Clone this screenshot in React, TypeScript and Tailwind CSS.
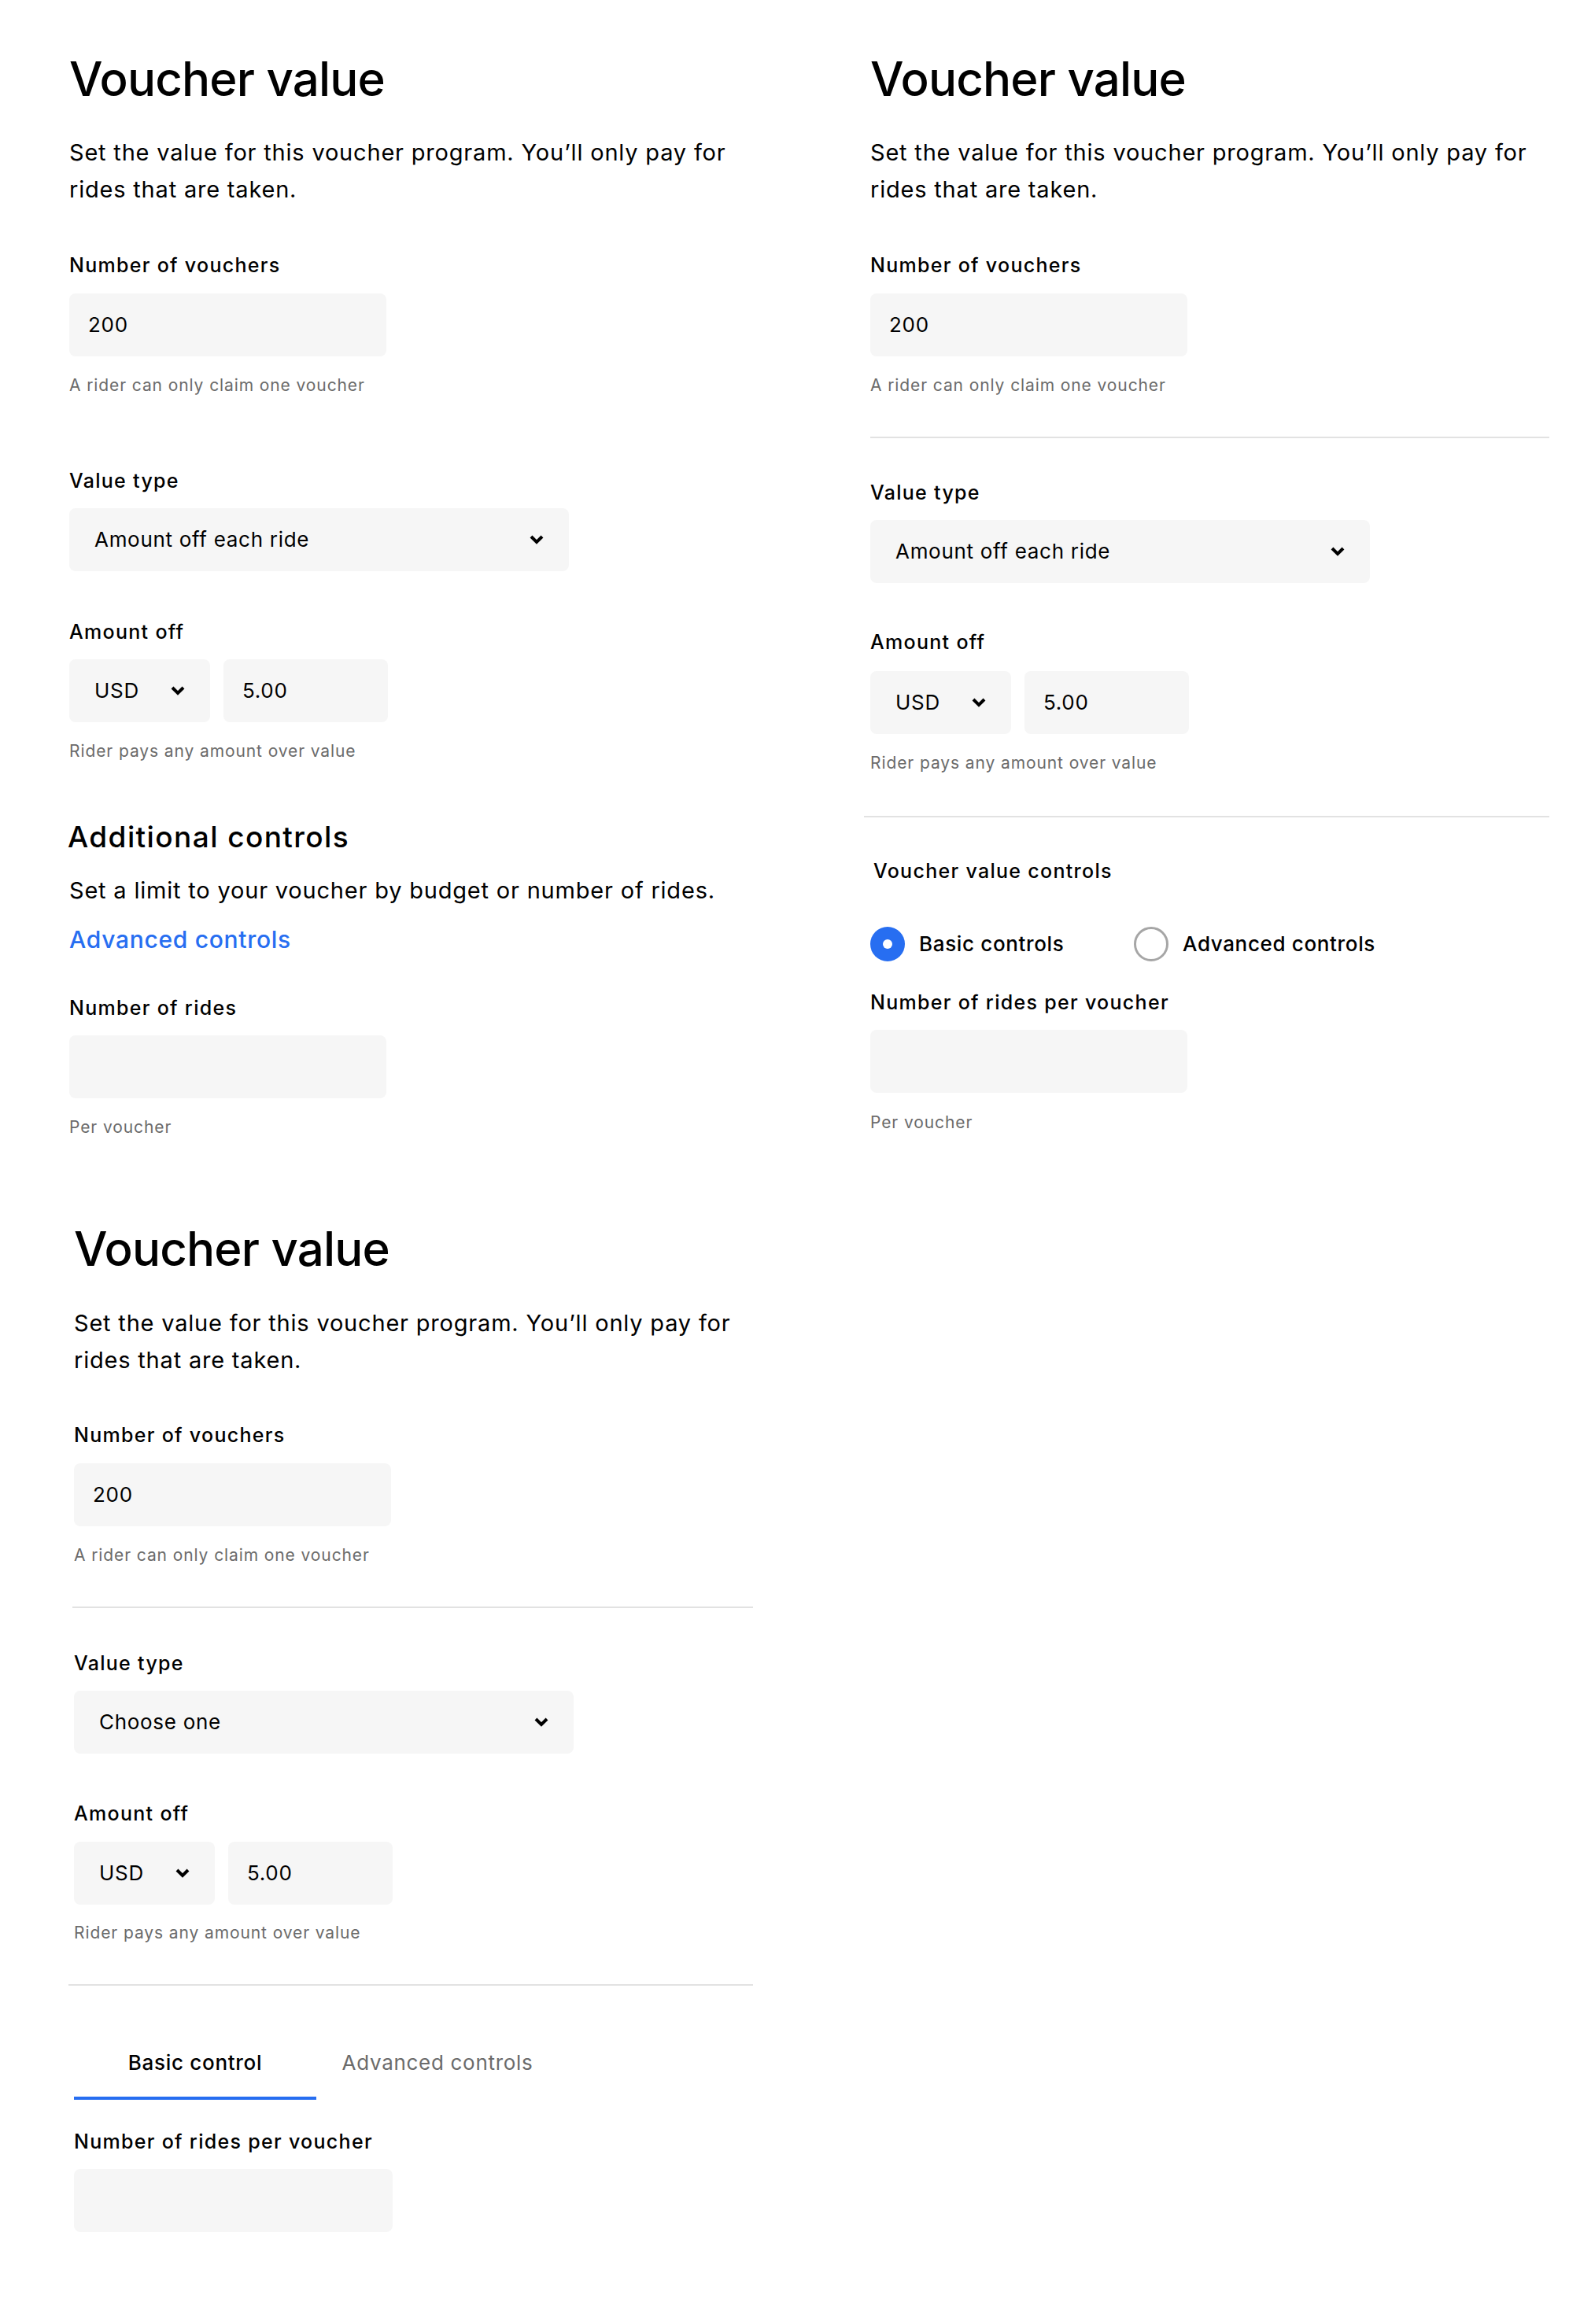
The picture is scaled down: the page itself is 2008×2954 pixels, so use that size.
import React from "react";

const Chevron = () => (
  <svg width="18" height="12" viewBox="0 0 18 12" className="shrink-0">
    <path d="M2 2 L9 9 L16 2" fill="none" stroke="#000" strokeWidth="4" strokeLinejoin="miter" />
  </svg>
);

const Heading = ({ className = "" }: { className?: string }) => (
  <div className={`text-[60px] leading-[72px] font-medium tracking-[-0.8px] text-black ${className}`}>Voucher value</div>
);

const Para = ({ className = "" }: { className?: string }) => (
  <p className={`text-[29px] leading-[47px] tracking-[0.8px] text-black ${className}`}>
    Set the value for this voucher program. You’ll only pay for
    <br />
    rides that are taken.
  </p>
);

const Label = ({ children, className = "" }: { children: React.ReactNode; className?: string }) => (
  <div className={`text-[25px] leading-[32px] font-medium tracking-[1.3px] text-black ${className}`}>{children}</div>
);

const Helper = ({ children, className = "" }: { children: React.ReactNode; className?: string }) => (
  <div className={`text-[21px] leading-[28px] tracking-[0.9px] text-[#6b6b6b] ${className}`}>{children}</div>
);

const Input = ({ value, className = "" }: { value?: string; className?: string }) => (
  <div className={`flex h-[80px] w-[403px] items-center rounded-[8px] bg-[#f6f6f6] pl-[24px] text-[26px] leading-[32px] tracking-[0.7px] text-black ${className}`}>
    {value}
  </div>
);

const Select = ({ value, className = "" }: { value: string; className?: string }) => (
  <div className={`flex h-[80px] w-[635px] items-center justify-between rounded-[8px] bg-[#f6f6f6] pl-[32px] pr-[32px] text-[26px] leading-[32px] tracking-[0.7px] text-black ${className}`}>
    <span>{value}</span>
    <Chevron />
  </div>
);

const AmountRow = ({ className = "" }: { className?: string }) => (
  <div className={`flex gap-[17px] ${className}`}>
    <div className="flex h-[80px] w-[179px] items-center justify-between rounded-[8px] bg-[#f6f6f6] pl-[32px] pr-[32px] text-[26px] leading-[32px] tracking-[0.7px] text-black">
      <span>USD</span>
      <Chevron />
    </div>
    <div className="flex h-[80px] w-[209px] items-center rounded-[8px] bg-[#f6f6f6] pl-[24px] text-[26px] leading-[32px] tracking-[0.7px] text-black">
      5.00
    </div>
  </div>
);

const Divider = ({ className = "" }: { className?: string }) => (
  <div className={`h-[2px] bg-[#e2e2e2] ${className}`} />
);

function PanelOne() {
  return (
    <div className="flex w-[880px] flex-col pt-[64px]">
      <Heading />
      <Para className="mt-[34px]" />
      <Label className="mt-[57px]">Number of vouchers</Label>
      <Input value="200" className="mt-[20px]" />
      <Helper className="mt-[23px]">A rider can only claim one voucher</Helper>
      <Label className="mt-[91px]">Value type</Label>
      <Select value="Amount off each ride" className="mt-[19px]" />
      <Label className="mt-[61px]">Amount off</Label>
      <AmountRow className="mt-[19px]" />
      <Helper className="mt-[23px]">Rider pays any amount over value</Helper>
      <div className="mt-[73px] -ml-[2px] text-[37px] leading-[44px] font-medium tracking-[1.4px] text-black">Additional controls</div>
      <p className="mt-[22px] text-[29px] leading-[48px] tracking-[0.8px] text-black">
        Set a limit to your voucher by budget or number of rides.
      </p>
      <a className="mt-[18px] text-[30px] leading-[40px] font-medium tracking-[0.7px] text-[#276ef1]">Advanced controls</a>
      <Label className="mt-[51px]">Number of rides</Label>
      <Input className="mt-[19px]" />
      <Helper className="mt-[23px]">Per voucher</Helper>
    </div>
  );
}

function PanelTwo() {
  return (
    <div className="ml-[138px] flex w-[863px] flex-col pt-[64px]">
      <Heading />
      <Para className="mt-[34px]" />
      <Label className="mt-[57px]">Number of vouchers</Label>
      <Input value="200" className="mt-[20px]" />
      <Helper className="mt-[23px]">A rider can only claim one voucher</Helper>
      <Divider className="mt-[51px] w-[863px]" />
      <Label className="mt-[53px]">Value type</Label>
      <Select value="Amount off each ride" className="mt-[19px]" />
      <Label className="mt-[59px]">Amount off</Label>
      <AmountRow className="mt-[21px]" />
      <Helper className="mt-[23px]">Rider pays any amount over value</Helper>
      <Divider className="mt-[53px] -ml-[8px] w-[871px]" />
      <Label className="mt-[52px] ml-[4px]">Voucher value controls</Label>
      <div className="mt-[55px] flex items-center">
        <div className="flex w-[335px] items-center gap-[18px]">
          <span className="flex h-[44px] w-[44px] items-center justify-center rounded-full bg-[#276ef1]">
            <span className="h-[12px] w-[12px] rounded-full bg-white" />
          </span>
          <span className="text-[26px] leading-[32px] font-medium tracking-[0.65px] text-black">Basic controls</span>
        </div>
        <div className="flex items-center gap-[18px]">
          <span className="h-[44px] w-[44px] rounded-full border-[3px] border-[#a6a6a6] bg-white" />
          <span className="text-[26px] leading-[32px] font-medium tracking-[0.65px] text-black">Advanced controls</span>
        </div>
      </div>
      <Label className="mt-[36px]">Number of rides per voucher</Label>
      <Input className="mt-[19px]" />
      <Helper className="mt-[24px]">Per voucher</Helper>
    </div>
  );
}

function PanelThree() {
  return (
    <div className="flex w-[957px] flex-col pl-[94px] pt-[104px] pb-[116px]">
      <Heading />
      <Para className="mt-[35px]" />
      <Label className="mt-[56px]">Number of vouchers</Label>
      <Input value="200" className="mt-[20px]" />
      <Helper className="mt-[23px]">A rider can only claim one voucher</Helper>
      <Divider className="mt-[51px] -ml-[2px] w-[865px]" />
      <Label className="mt-[54px]">Value type</Label>
      <Select value="Choose one" className="mt-[19px]" />
      <Label className="mt-[60px]">Amount off</Label>
      <AmountRow className="mt-[20px]" />
      <Helper className="mt-[22px]">Rider pays any amount over value</Helper>
      <Divider className="mt-[51px] -ml-[7px] w-[870px]" />
      <div className="mt-[82px] flex">
        <div className="flex w-[308px] flex-col items-center">
          <span className="text-[26px] leading-[32px] font-medium tracking-[0.7px] text-black">Basic control</span>
          <span className="mt-[27px] h-[4px] w-full bg-[#276ef1]" />
        </div>
        <div className="flex w-[308px] flex-col items-center">
          <span className="text-[26px] leading-[32px] tracking-[0.7px] text-[#6b6b6b]">Advanced controls</span>
        </div>
      </div>
      <Label className="mt-[37px]">Number of rides per voucher</Label>
      <Input className="mt-[19px] w-[405px]" />
    </div>
  );
}

export default function App() {
  return (
    <div className="min-h-[2954px] w-[2008px] bg-white font-['Inter',sans-serif] antialiased">
      <div className="flex pl-[88px]">
        <PanelOne />
        <PanelTwo />
      </div>
      <PanelThree />
    </div>
  );
}
